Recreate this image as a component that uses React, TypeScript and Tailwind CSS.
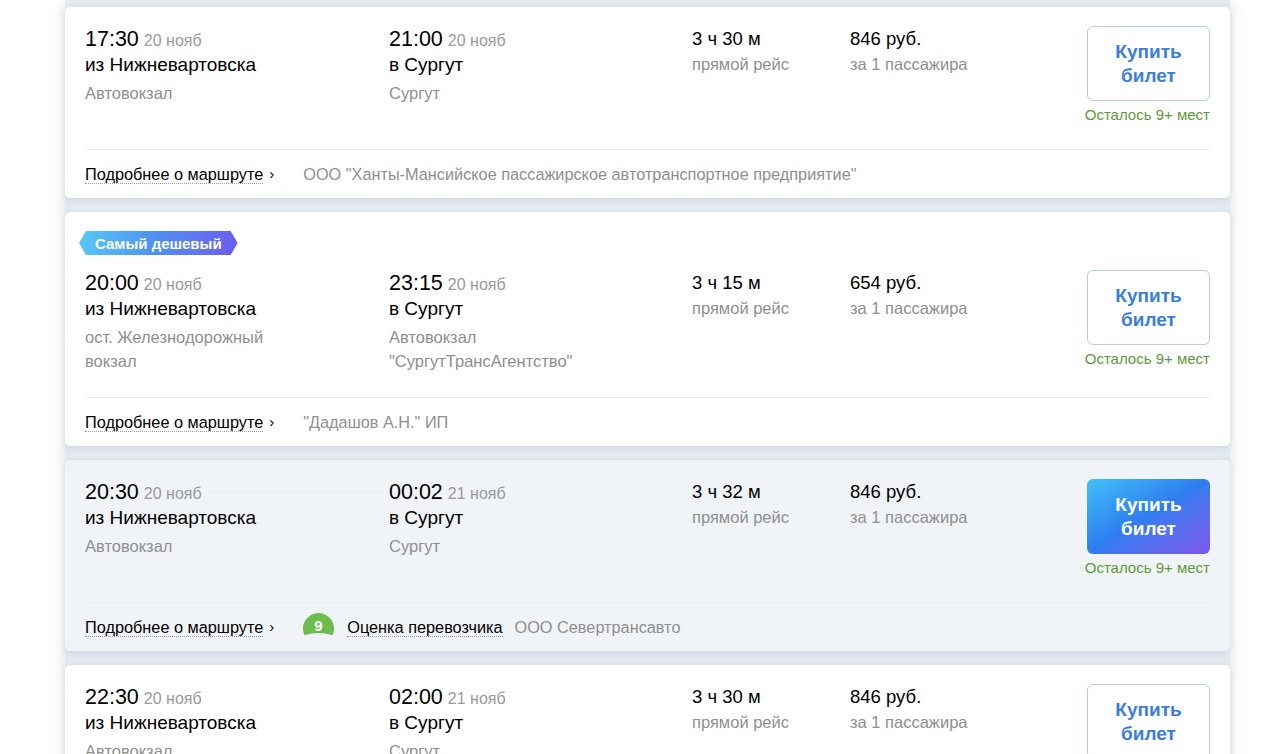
import React from "react";

type Trip = {
  dep: string;
  depDate: string;
  from: string;
  fromSt: string[];
  arr: string;
  arrDate: string;
  to: string;
  toSt: string[];
  dur: string;
  price: string;
  carrier: string;
  cheapest?: boolean;
  active?: boolean;
  rating?: boolean;
};

const trips: Trip[] = [
  {
    dep: "17:30",
    depDate: "20 нояб",
    from: "из Нижневартовска",
    fromSt: ["Автовокзал"],
    arr: "21:00",
    arrDate: "20 нояб",
    to: "в Сургут",
    toSt: ["Сургут"],
    dur: "3 ч 30 м",
    price: "846 руб.",
    carrier: 'ООО "Ханты-Мансийское пассажирское автотранспортное предприятие"',
  },
  {
    dep: "20:00",
    depDate: "20 нояб",
    from: "из Нижневартовска",
    fromSt: ["ост. Железнодорожный", "вокзал"],
    arr: "23:15",
    arrDate: "20 нояб",
    to: "в Сургут",
    toSt: ["Автовокзал", '"СургутТрансАгентство"'],
    dur: "3 ч 15 м",
    price: "654 руб.",
    carrier: '"Дадашов А.Н." ИП',
    cheapest: true,
  },
  {
    dep: "20:30",
    depDate: "20 нояб",
    from: "из Нижневартовска",
    fromSt: ["Автовокзал"],
    arr: "00:02",
    arrDate: "21 нояб",
    to: "в Сургут",
    toSt: ["Сургут"],
    dur: "3 ч 32 м",
    price: "846 руб.",
    carrier: "ООО Севертрансавто",
    active: true,
    rating: true,
  },
  {
    dep: "22:30",
    depDate: "20 нояб",
    from: "из Нижневартовска",
    fromSt: ["Автовокзал"],
    arr: "02:00",
    arrDate: "21 нояб",
    to: "в Сургут",
    toSt: ["Сургут"],
    dur: "3 ч 30 м",
    price: "846 руб.",
    carrier: "ООО Автотранс",
  },
];

function Rating() {
  return (
    <svg width="31" height="28" viewBox="0 0 31 28" className="shrink-0">
      <path
        d="M15.5 0 A15.5 15.5 0 0 1 29.5 22.2 Q15.5 18 1.5 22.2 A15.5 15.5 0 0 1 15.5 0 Z"
        fill="#6cbd4d"
      />
      <text
        x="15.5"
        y="14.5"
        textAnchor="middle"
        dominantBaseline="middle"
        fill="#fff"
        fontSize="15"
        fontWeight="700"
        fontFamily="Liberation Sans, Arial, sans-serif"
      >
        9
      </text>
    </svg>
  );
}

function Card({ t }: { t: Trip }) {
  return (
    <div
      className={`rounded-[5px] shadow-[0_2px_6px_rgba(120,140,165,0.18)] ${
        t.active ? "bg-[#f1f4f7]" : "bg-white"
      }`}
    >
      <div className="px-5 pt-[19px] pb-[24px]">
        {t.cheapest && (
          <div className="-ml-[6px] mb-[15px] h-[24px] flex">
            <div className="h-[24px] px-[16px] flex items-center text-white text-[15px] font-bold leading-none bg-gradient-to-r from-[#56c9f6] via-[#4f8df0] to-[#6a5cf0] [clip-path:polygon(7px_0,calc(100%-7px)_0,100%_50%,calc(100%-7px)_100%,7px_100%,0_50%)]">
              Самый дешевый
            </div>
          </div>
        )}
        <div className="flex items-start">
          <div className="w-[304px] shrink-0 relative">
            <div className="h-[26px] flex items-baseline">
              <span className="text-[21.5px] leading-[26px] text-black">{t.dep}</span>
              <span className="ml-[5px] text-[16px] text-[#9a9a9a]">{t.depDate}</span>
            </div>
            <div className="text-[19px] leading-[26px] text-black">{t.from}</div>
            <div className="mt-[3px]">
              {t.fromSt.map((s) => (
                <div key={s} className="text-[16.5px] leading-[24px] text-[#8f8f8f]">
                  {s}
                </div>
              ))}
            </div>
            {t.active && (
              <div className="absolute left-[124px] top-[12px] w-[174px] border-t border-dashed border-[#e6eaee]" />
            )}
          </div>
          <div className="w-[303px] shrink-0">
            <div className="h-[26px] flex items-baseline">
              <span className="text-[21.5px] leading-[26px] text-black">{t.arr}</span>
              <span className="ml-[5px] text-[16px] text-[#9a9a9a]">{t.arrDate}</span>
            </div>
            <div className="text-[19px] leading-[26px] text-black">{t.to}</div>
            <div className="mt-[3px]">
              {t.toSt.map((s) => (
                <div key={s} className="text-[16.5px] leading-[24px] text-[#8f8f8f]">
                  {s}
                </div>
              ))}
            </div>
          </div>
          <div className="w-[158px] shrink-0">
            <div className="text-[18.5px] leading-[26px] text-black">{t.dur}</div>
            <div className="text-[16.5px] leading-[25px] text-[#8f8f8f]">прямой рейс</div>
          </div>
          <div className="flex-1">
            <div className="text-[18.5px] leading-[26px] text-black">{t.price}</div>
            <div className="text-[16.5px] leading-[25px] text-[#8f8f8f]">за 1 пассажира</div>
          </div>
          <div className="flex flex-col items-end">
            {t.active ? (
              <button className="w-[123px] h-[75px] rounded-[6px] bg-gradient-to-br from-[#45c0f6] via-[#2f7cf0] to-[#7a58ee] text-white text-[19px] leading-[24px] font-bold">
                Купить
                <br />
                билет
              </button>
            ) : (
              <button className="w-[123px] h-[75px] rounded-[6px] border border-[#b3cbe8] bg-white text-[#3a7ddf] text-[19px] leading-[24px] font-bold">
                Купить
                <br />
                билет
              </button>
            )}
            <div className="mt-[3px] text-[15px] leading-[21px] text-[#5d9a3b]">
              Осталось 9+ мест
            </div>
          </div>
        </div>
      </div>
      <div className="mx-5 border-t border-[#e9edf1]" />
      <div className="px-5 h-[48px] flex items-center text-[16.3px]">
        <span className="text-black border-b border-dotted border-[#9aa3ad] leading-[18px]">
          Подробнее о маршруте
        </span>
        <span className="ml-[6px] text-black text-[15px]">›</span>
        {t.rating ? (
          <div className="ml-[29px] flex items-center">
            <Rating />
            <span className="ml-[13px] text-black border-b border-dotted border-[#9aa3ad] leading-[18px]">
              Оценка перевозчика
            </span>
            <span className="ml-[12px] text-[#8f8f8f]">{t.carrier}</span>
          </div>
        ) : (
          <span className="ml-[29px] text-[#8f8f8f]">{t.carrier}</span>
        )}
      </div>
    </div>
  );
}

export default function App() {
  return (
    <div
      className="w-[1280px] h-[754px] overflow-hidden bg-white"
      style={{ fontFamily: '"Liberation Sans", Arial, sans-serif' }}
    >
      <div className="ml-[65px] w-[1165px] min-h-[800px] bg-[#e3e9ef] shadow-[0_0_14px_rgba(200,210,222,0.7)] pt-[7px] flex flex-col gap-[14px]">
        {trips.map((t, i) => (
          <Card key={i} t={t} />
        ))}
      </div>
    </div>
  );
}
